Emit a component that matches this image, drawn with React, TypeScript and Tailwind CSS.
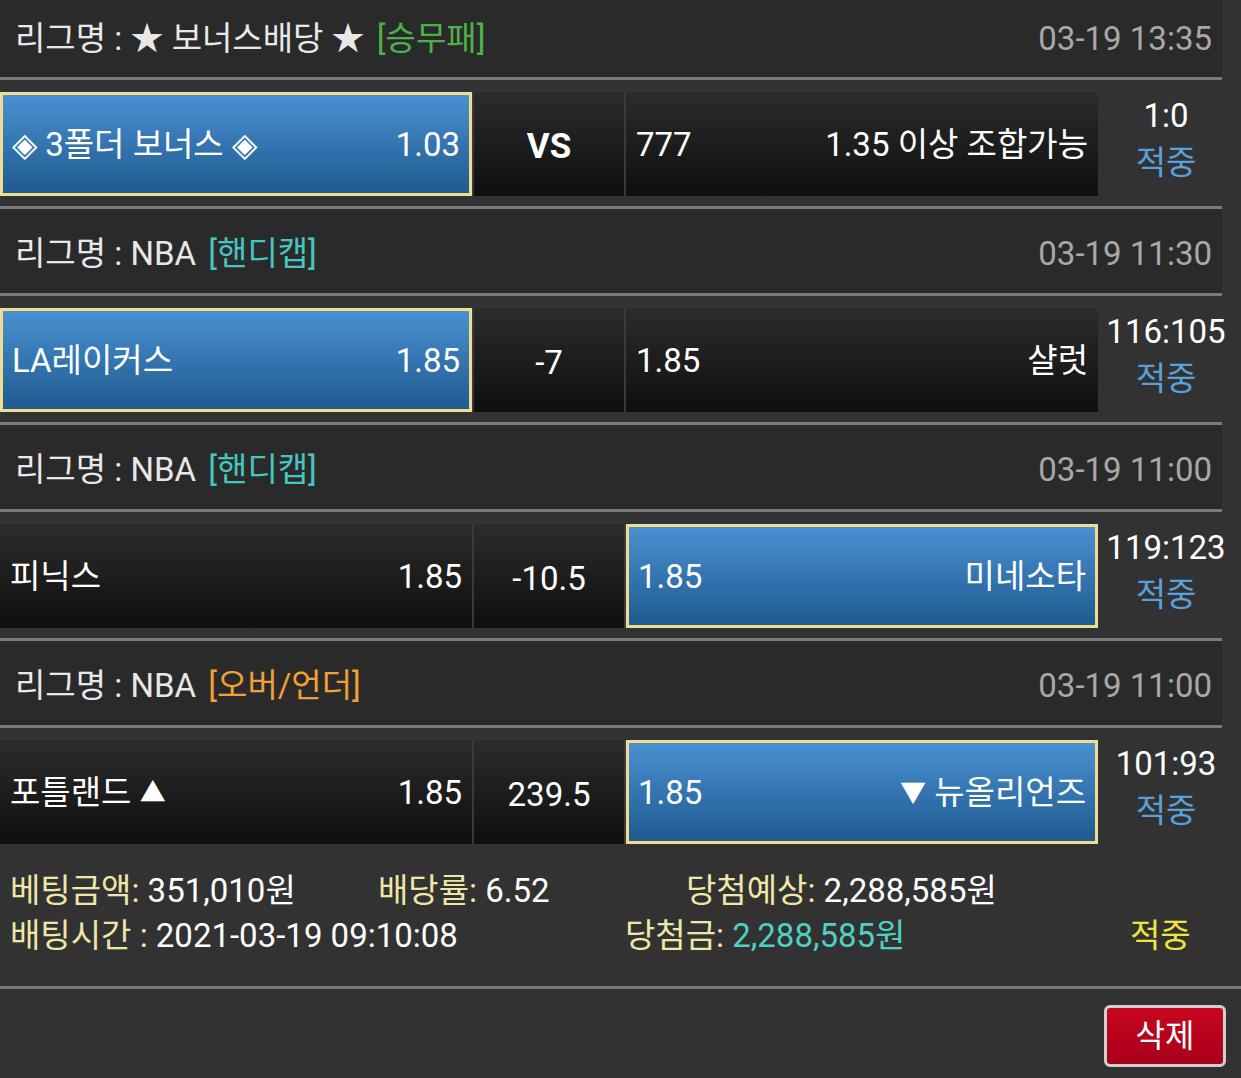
import React from "react";

type Side = { text: React.ReactNode; odds: string; selected?: boolean };
type Game = {
  league: string;
  tag: string;
  tagColor: string;
  date: string;
  left: Side;
  mid: string;
  midBold?: boolean;
  right: Side;
  score: string;
};

const Tri = ({ c }: { c: string }) => <span className="text-[26px] align-[2px]">{c}</span>;

const games: Game[] = [
  {
    league: "★ 보너스배당 ★",
    tag: "[승무패]",
    tagColor: "text-[#4fb04a]",
    date: "03-19 13:35",
    left: { text: "◈ 3폴더 보너스 ◈", odds: "1.03", selected: true },
    mid: "VS",
    midBold: true,
    right: { text: "1.35 이상 조합가능", odds: "777" },
    score: "1:0",
  },
  {
    league: "NBA",
    tag: "[핸디캡]",
    tagColor: "text-[#45c6c0]",
    date: "03-19 11:30",
    left: { text: "LA레이커스", odds: "1.85", selected: true },
    mid: "-7",
    right: { text: "샬럿", odds: "1.85" },
    score: "116:105",
  },
  {
    league: "NBA",
    tag: "[핸디캡]",
    tagColor: "text-[#45c6c0]",
    date: "03-19 11:00",
    left: { text: "피닉스", odds: "1.85" },
    mid: "-10.5",
    right: { text: "미네소타", odds: "1.85", selected: true },
    score: "119:123",
  },
  {
    league: "NBA",
    tag: "[오버/언더]",
    tagColor: "text-[#f0a035]",
    date: "03-19 11:00",
    left: {
      text: (
        <>
          포틀랜드 <Tri c="▲" />
        </>
      ),
      odds: "1.85",
    },
    mid: "239.5",
    right: {
      text: (
        <>
          <Tri c="▼" /> 뉴올리언즈
        </>
      ),
      odds: "1.85",
      selected: true,
    },
    score: "101:93",
  },
];

const cellBase = "h-[104px] flex items-center justify-between text-white whitespace-nowrap";
const darkCell = "bg-gradient-to-b from-[#2c2c2c] to-[#0f0f0f]";
const blueCell =
  "bg-gradient-to-b from-[#4a91d2] to-[#1f5a90] border-[3px] border-[#eedc92]";

function SideCell({ side, isLeft }: { side: Side; isLeft: boolean }) {
  const cls = `${cellBase} w-[472px] shrink-0 ${side.selected ? blueCell : darkCell} ${
    side.selected ? "px-[9px]" : "px-[10px]"
  }`;
  return (
    <div className={cls}>
      {isLeft ? (
        <>
          <span>{side.text}</span>
          <span>{side.odds}</span>
        </>
      ) : (
        <>
          <span>{side.odds}</span>
          <span>{side.text}</span>
        </>
      )}
    </div>
  );
}

function GameBlock({ g, first, last }: { g: Game; first: boolean; last: boolean }) {
  return (
    <div className="w-[1241px]">
      <div
        className={`w-[1222px] ${first ? "h-[77px]" : "h-[84px] pt-[4px]"} bg-[#2a2a2a] flex items-center justify-between pl-[15px] pr-[10px]`}
      >
        <div className="text-[#e8e8e8] whitespace-nowrap">
          리그명 : {g.league} <span className={`${g.tagColor} ml-[4px]`}>{g.tag}</span>
        </div>
        <div className="text-[#a8a8a8]">{g.date}</div>
      </div>
      <div className="w-[1222px] h-[3px] bg-[#7a7a7a]" />
      <div className={`w-[1234px] pt-[12px] ${last ? "pb-0" : "pb-[10px]"} flex items-center`}>
        <SideCell side={g.left} isLeft />
        <div className="w-[2px] shrink-0 h-[104px] bg-[#3a3a3a]" />
        <div
          className={`${cellBase} ${darkCell} w-[150px] shrink-0 justify-center ${
            g.midBold ? "font-bold text-[35px] pt-[4px]" : "pt-[4px]"
          }`}
        >
          {g.mid}
        </div>
        <div className="w-[2px] shrink-0 h-[104px] bg-[#3a3a3a]" />
        <SideCell side={g.right} isLeft={false} />
        <div className="w-[136px] shrink-0 flex flex-col items-center justify-center h-[104px] leading-[47px] pb-[10px] whitespace-nowrap">
          <span className="text-white">{g.score}</span>
          <span className="text-[#5a9fdb]">적중</span>
        </div>
      </div>
      {!last && <div className="w-[1222px] h-[3px] bg-[#7a7a7a]" />}
    </div>
  );
}

export default function App() {
  return (
    <div
      className="w-[1241px] h-[1078px] bg-[#323232] overflow-hidden text-[33px] leading-none"
      style={{ fontFamily: 'Roboto, "Noto Sans CJK KR", sans-serif' }}
    >
      {games.map((g, i) => (
        <GameBlock key={i} g={g} first={i === 0} last={i === games.length - 1} />
      ))}
      <div className="h-[142px] pl-[10px] flex flex-col justify-center gap-[12px] pb-[4px] whitespace-nowrap">
        <div className="flex items-center">
          <div className="w-[368px]">
            <span className="text-[#efe6a8]">베팅금액:</span>
            <span className="text-white"> 351,010원</span>
          </div>
          <div className="w-[308px]">
            <span className="text-[#efe6a8]">배당률:</span>
            <span className="text-white"> 6.52</span>
          </div>
          <div>
            <span className="text-[#efe6a8]">당첨예상:</span>
            <span className="text-white"> 2,288,585원</span>
          </div>
        </div>
        <div className="flex items-center">
          <div className="w-[615px]">
            <span className="text-[#efe6a8]">배팅시간 :</span>
            <span className="text-white"> 2021-03-19 09:10:08</span>
          </div>
          <div className="w-[505px]">
            <span className="text-[#efe6a8]">당첨금:</span>
            <span className="text-[#4fd0c4]"> 2,288,585원</span>
          </div>
          <div className="text-[#f2e33a]">적중</div>
        </div>
      </div>
      <div className="h-[3px] bg-[#7a7a7a]" />
      <div className="flex justify-end pr-[15px] pt-[16px]">
        <button className="w-[122px] h-[62px] rounded-[6px] border-[3px] border-[#d0d0d0] bg-gradient-to-b from-[#c8061f] to-[#a8001a] text-white text-[32px] flex items-center justify-center">
          삭제
        </button>
      </div>
    </div>
  );
}
